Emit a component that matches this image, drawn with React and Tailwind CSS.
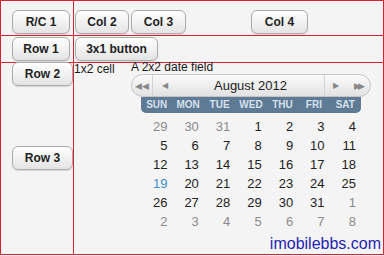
import React from 'react';

const weeks = [
  [[29, 'o'], [30, 'o'], [31, 'o'], [1], [2], [3], [4]],
  [[5], [6], [7], [8], [9], [10], [11]],
  [[12], [13], [14], [15], [16], [17], [18]],
  [[19, 't'], [20], [21], [22], [23], [24], [25]],
  [[26], [27], [28], [29], [30], [31], [1, 'o']],
  [[2, 'o'], [3, 'o'], [4, 'o'], [5, 'o'], [6, 'o'], [7, 'o'], [8, 'o']],
];

const days = ['SUN', 'MON', 'TUE', 'WED', 'THU', 'FRI', 'SAT'];

function Btn({ className, children }) {
  return (
    <div
      className={`flex items-center justify-center h-[24px] rounded-[6px] border border-[#ababab] bg-linear-to-b from-white to-[#e4e4e4] shadow-[0_1px_1px_rgba(0,0,0,0.12)] text-[12px] font-bold text-[#222] ${className}`}
    >
      {children}
    </div>
  );
}

export default function App() {
  return (
    <div className="relative w-[384px] h-[256px] bg-[#f4f4f4] font-['Liberation_Sans',Arial,sans-serif] overflow-hidden">
      <div className="h-[255px] border border-[#d42434] flex flex-col">
        {/* row 0 */}
        <div className="h-[35px] shrink-0 flex border-b border-[#d42434]">
          <div className="w-[73px] shrink-0 border-r border-[#d42434]">
            <Btn className="ml-[11px] mt-[9px] w-[58px]">R/C 1</Btn>
          </div>
          <div className="flex-1 flex items-start pt-[9px]">
            <Btn className="ml-[1px] w-[54px]">Col 2</Btn>
            <Btn className="ml-[2px] w-[55px]">Col 3</Btn>
            <Btn className="ml-[65px] w-[57px]">Col 4</Btn>
          </div>
        </div>

        {/* row 1 */}
        <div className="h-[27px] shrink-0 flex border-b border-[#d42434]">
          <div className="w-[73px] shrink-0 border-r border-[#d42434]">
            <Btn className="ml-[11px] mt-[1px] w-[58px]">Row 1</Btn>
          </div>
          <div className="flex-1">
            <Btn className="ml-[1px] mt-[1px] w-[83px]">3x1 button</Btn>
          </div>
        </div>

        {/* rows 2-3 */}
        <div className="flex-1 flex">
          <div className="w-[73px] shrink-0 border-r border-[#d42434]">
            <Btn className="relative ml-[11px] mt-[-1px] w-[61px]">Row 2</Btn>
            <Btn className="ml-[11px] mt-[60px] w-[61px]">Row 3</Btn>
          </div>
          <div className="flex-1 flex text-[12px] leading-[14px] text-[#1a1a1a]">
            <div className="w-[57px] mt-[-1px]">1x2 cell</div>
            <div className="mt-[-3px]">
              <div>A 2x2 date field</div>

              {/* calendar header */}
              <div className="w-[240px] h-[23px] flex items-center rounded-full border border-[#c4c4c4] bg-linear-to-b from-[#fbfbfb] to-[#e2e2e2] text-[#888]">
                <div className="w-[21px] h-full flex items-center justify-center border-r border-[#d4d4d4] text-[9px]">◀◀</div>
                <div className="w-[24px] h-full flex items-center justify-center text-[8px]">◀</div>
                <div className="flex-1 text-center text-[13px] text-[#222]">August 2012</div>
                <div className="w-[22px] h-full flex items-center justify-center border-l border-[#d4d4d4] text-[8px]">▶</div>
                <div className="w-[24px] h-full flex items-center justify-center text-[9px] tracking-[-3px]">▶▶</div>
              </div>

              {/* weekday bar */}
              <div className="ml-[10px] w-[220px] h-[16px] grid grid-cols-7 items-center rounded-b-[5px] bg-[#5f7a95] text-[10px] font-bold text-[#d6e0ea]">
                {days.map((d) => (
                  <div key={d} className="text-center">{d}</div>
                ))}
              </div>

              {/* dates */}
              <div className="ml-[10px] w-[220px] mt-[4px] text-[13px]">
                {weeks.map((w, i) => (
                  <div key={i} className="grid grid-cols-7 h-[19px] items-center">
                    {w.map(([n, k], j) => (
                      <div
                        key={j}
                        className={`text-right pr-[5px] ${k === 'o' ? 'text-[#8a8a8a]' : k === 't' ? 'text-[#3d8ec9]' : 'text-[#222]'}`}
                      >
                        {n}
                      </div>
                    ))}
                  </div>
                ))}
              </div>
            </div>
          </div>
        </div>
      </div>

      {/* watermark */}
      <div className="absolute right-[3px] bottom-[3px] text-[16px] leading-[18px] text-[#1f1fb4]">imobilebbs.com</div>
    </div>
  );
}
